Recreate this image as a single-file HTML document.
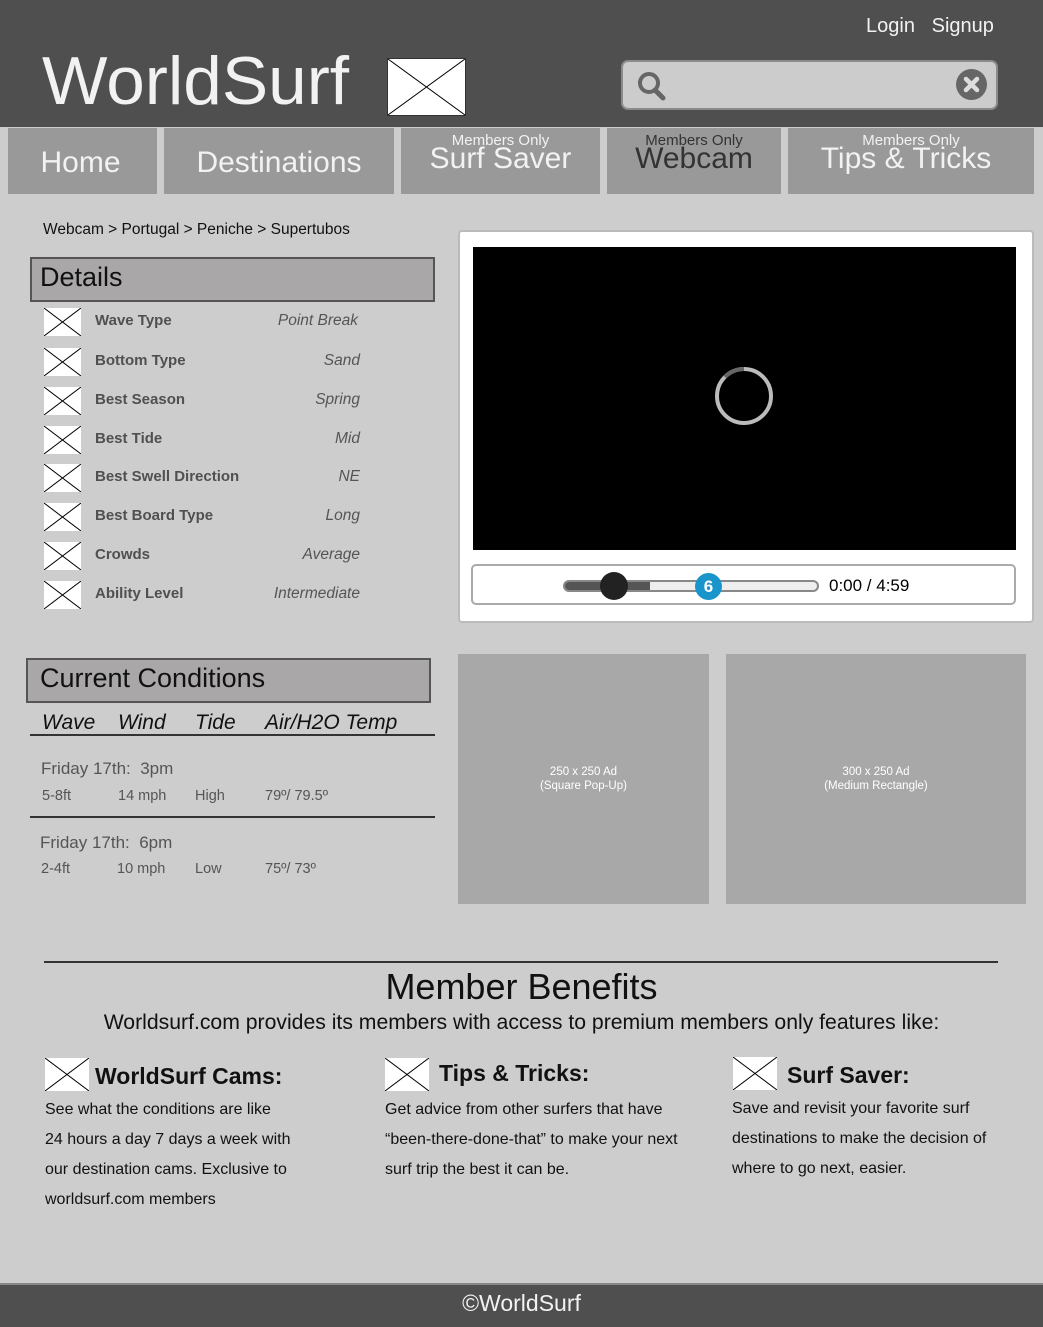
<!DOCTYPE html>
<html><head><meta charset="utf-8"><style>
*{margin:0;padding:0;box-sizing:border-box}
body{width:1043px;height:1327px;background:#cdcdcd;font-family:"Liberation Sans",sans-serif;position:relative;overflow:hidden}
.a{position:absolute;white-space:nowrap}
.x{position:absolute;background:#fff}
.x svg{display:block;width:100%;height:100%}
.tab{position:absolute;top:128px;height:66px;background:#999;color:#f2f2f2;text-align:center}
.tab .m{font-size:15px;position:absolute;left:0;right:0;top:4px}
.tab .t{font-size:30px;position:absolute;left:0;right:0;top:18px}
.lbl{position:absolute;left:95px;font-weight:bold;font-size:15px;color:#505050}
.val{position:absolute;right:683px;font-style:italic;font-size:15.5px;color:#555}
.ct{position:absolute;font-size:14.5px;color:#555}
.bt{position:absolute;font-size:16px;color:#111;line-height:30px}
</style></head><body>
<div class="a" style="left:0;top:0;width:1043px;height:127px;background:#4f4f4f"></div>
<div class="a" style="left:866px;top:15px;font-size:20px;color:#f2f2f2">Login&nbsp;&nbsp; Signup</div>
<div class="a" style="left:42px;top:42px;font-size:68px;color:#f2f2f2;transform:scaleX(1.02);transform-origin:left">WorldSurf</div>
<div class="x" style="left:387px;top:58px;width:79px;height:58px;border:1px solid #333"><svg viewBox="0 0 79 58" preserveAspectRatio="none"><path d="M0 0L79 58M79 0L0 58" stroke="#000" stroke-width="1"/></svg></div>
<div class="a" style="left:621px;top:60px;width:377px;height:50px;background:#ccc;border:2px solid #8a8a8a;border-radius:7px"></div>
<svg class="a" style="left:634px;top:69px" width="36" height="34" viewBox="0 0 36 34"><circle cx="15" cy="14" r="9" fill="none" stroke="#666" stroke-width="4"/><path d="M21 21L29 29" stroke="#666" stroke-width="5" stroke-linecap="round"/></svg>
<svg class="a" style="left:955px;top:68px" width="33" height="33" viewBox="0 0 33 33"><circle cx="16.5" cy="16.5" r="15.5" fill="#666"/><path d="M11 11L22 22M22 11L11 22" stroke="#ddd" stroke-width="4.5" stroke-linecap="round"/></svg>

<div class="tab" style="left:8px;width:149px"><div class="t" style="left:-4px">Home</div></div>
<div class="tab" style="left:164px;width:230px"><div class="t">Destinations</div></div>
<div class="tab" style="left:401px;width:199px"><div class="m">Members Only</div><div class="t" style="top:14px">Surf Saver</div></div>
<div class="tab" style="left:607px;width:174px;color:#333"><div class="m">Members Only</div><div class="t" style="top:14px">Webcam</div></div>
<div class="tab" style="left:788px;width:246px"><div class="m">Members Only</div><div class="t" style="top:14px;left:-10px">Tips &amp; Tricks</div></div>

<div class="a" style="left:43px;top:221px;font-size:15.5px;color:#111">Webcam &gt; Portugal &gt; Peniche &gt; Supertubos</div>
<div class="a" style="left:30px;top:257px;width:405px;height:45px;background:#a9a7a8;border:2px solid #555"></div>
<div class="a" style="left:40px;top:262px;font-size:27px;color:#111">Details</div>

<div class="x" style="left:44px;top:308px;width:37px;height:28px"><svg viewBox="0 0 37 28" preserveAspectRatio="none"><path d="M0 0L37 28M37 0L0 28" stroke="#000"/></svg></div>
<div class="lbl" style="top:312px">Wave Type</div><div class="val" style="top:312px;right:685px">Point Break</div>
<div class="x" style="left:44px;top:348px;width:37px;height:28px"><svg viewBox="0 0 37 28" preserveAspectRatio="none"><path d="M0 0L37 28M37 0L0 28" stroke="#000"/></svg></div>
<div class="lbl" style="top:352px">Bottom Type</div><div class="val" style="top:352px">Sand</div>
<div class="x" style="left:44px;top:387px;width:37px;height:28px"><svg viewBox="0 0 37 28" preserveAspectRatio="none"><path d="M0 0L37 28M37 0L0 28" stroke="#000"/></svg></div>
<div class="lbl" style="top:391px">Best Season</div><div class="val" style="top:391px">Spring</div>
<div class="x" style="left:44px;top:426px;width:37px;height:28px"><svg viewBox="0 0 37 28" preserveAspectRatio="none"><path d="M0 0L37 28M37 0L0 28" stroke="#000"/></svg></div>
<div class="lbl" style="top:430px">Best Tide</div><div class="val" style="top:430px">Mid</div>
<div class="x" style="left:44px;top:464px;width:37px;height:28px"><svg viewBox="0 0 37 28" preserveAspectRatio="none"><path d="M0 0L37 28M37 0L0 28" stroke="#000"/></svg></div>
<div class="lbl" style="top:468px">Best Swell Direction</div><div class="val" style="top:468px">NE</div>
<div class="x" style="left:44px;top:503px;width:37px;height:28px"><svg viewBox="0 0 37 28" preserveAspectRatio="none"><path d="M0 0L37 28M37 0L0 28" stroke="#000"/></svg></div>
<div class="lbl" style="top:507px">Best Board Type</div><div class="val" style="top:507px">Long</div>
<div class="x" style="left:44px;top:542px;width:37px;height:28px"><svg viewBox="0 0 37 28" preserveAspectRatio="none"><path d="M0 0L37 28M37 0L0 28" stroke="#000"/></svg></div>
<div class="lbl" style="top:546px">Crowds</div><div class="val" style="top:546px">Average</div>
<div class="x" style="left:44px;top:581px;width:37px;height:28px"><svg viewBox="0 0 37 28" preserveAspectRatio="none"><path d="M0 0L37 28M37 0L0 28" stroke="#000"/></svg></div>
<div class="lbl" style="top:585px">Ability Level</div><div class="val" style="top:585px">Intermediate</div>

<div class="a" style="left:458px;top:230px;width:576px;height:393px;background:#fff;border:2px solid #bbb;border-radius:4px"></div>
<div class="a" style="left:473px;top:247px;width:543px;height:303px;background:#000"></div>
<svg class="a" style="left:712px;top:364px" width="64" height="64" viewBox="0 0 64 64"><circle cx="32" cy="32" r="27" fill="none" stroke="#bbb" stroke-width="4"/><path d="M13 13A27 27 0 0 1 32 5" fill="none" stroke="#666" stroke-width="4"/></svg>
<div class="a" style="left:471px;top:564px;width:545px;height:41px;border:2px solid #aaa;border-radius:5px;background:#fff"></div>
<div class="a" style="left:563px;top:580px;width:256px;height:12px;border:2px solid #888;border-radius:6px;background:#eee"></div>
<div class="a" style="left:565px;top:582px;width:85px;height:8px;background:#555;border-radius:4px 0 0 4px"></div>
<div class="a" style="left:600px;top:572px;width:28px;height:28px;border-radius:50%;background:#222"></div>
<div class="a" style="left:695px;top:573px;width:27px;height:27px;border-radius:50%;background:#1a95cc;color:#fff;font-weight:bold;font-size:17px;text-align:center;line-height:27px">6</div>
<div class="a" style="left:829px;top:576px;font-size:17px;color:#000">0:00 / 4:59</div>

<div class="a" style="left:26px;top:658px;width:405px;height:45px;background:#a9a7a8;border:2px solid #555"></div>
<div class="a" style="left:40px;top:663px;font-size:27px;color:#111">Current Conditions</div>
<div class="a" style="left:42px;top:711px;font-size:21px;font-style:italic;color:#111">Wave</div>
<div class="a" style="left:118px;top:711px;font-size:21px;font-style:italic;color:#111">Wind</div>
<div class="a" style="left:195px;top:711px;font-size:21px;font-style:italic;color:#111">Tide</div>
<div class="a" style="left:265px;top:711px;font-size:21px;font-style:italic;color:#111">Air/H2O Temp</div>
<div class="a" style="left:30px;top:734px;width:405px;height:2px;background:#333"></div>
<div class="a" style="left:41px;top:759px;font-size:17px;color:#555">Friday 17th:&nbsp; 3pm</div>
<div class="ct" style="left:42px;top:788px">5-8ft</div><div class="ct" style="left:118px;top:788px">14 mph</div><div class="ct" style="left:195px;top:788px">High</div><div class="ct" style="left:265px;top:788px">79º/ 79.5º</div>
<div class="a" style="left:30px;top:816px;width:405px;height:2px;background:#333"></div>
<div class="a" style="left:40px;top:833px;font-size:17px;color:#555">Friday 17th:&nbsp; 6pm</div>
<div class="ct" style="left:41px;top:861px">2-4ft</div><div class="ct" style="left:117px;top:861px">10 mph</div><div class="ct" style="left:195px;top:861px">Low</div><div class="ct" style="left:265px;top:861px">75º/ 73º</div>

<div class="a" style="left:458px;top:654px;width:251px;height:250px;background:#a8a8a8;color:#fff;font-size:11.5px;text-align:center;padding-top:111px;line-height:14px">250 x 250 Ad<br>(Square Pop-Up)</div>
<div class="a" style="left:726px;top:654px;width:300px;height:250px;background:#a8a8a8;color:#fff;font-size:11.5px;text-align:center;padding-top:111px;line-height:14px">300 x 250 Ad<br>(Medium Rectangle)</div>

<div class="a" style="left:44px;top:961px;width:954px;height:2px;background:#333"></div>
<div class="a" style="left:0;width:1043px;text-align:center;top:966px;font-size:36px;color:#111">Member Benefits</div>
<div class="a" style="left:0;width:1043px;text-align:center;top:1011px;font-size:21.2px;color:#111">Worldsurf.com provides its members with access to premium members only features like:</div>

<div class="x" style="left:45px;top:1058px;width:44px;height:33px"><svg viewBox="0 0 44 33" preserveAspectRatio="none"><path d="M0 0L44 33M44 0L0 33" stroke="#000"/></svg></div>
<div class="a" style="left:95px;top:1063px;font-size:23px;font-weight:bold;color:#111">WorldSurf Cams:</div>
<div class="bt" style="left:45px;top:1095px">See what the conditions are like<br>24 hours a day 7 days a week with<br>our destination cams. Exclusive to<br>worldsurf.com members</div>

<div class="x" style="left:385px;top:1058px;width:44px;height:33px"><svg viewBox="0 0 44 33" preserveAspectRatio="none"><path d="M0 0L44 33M44 0L0 33" stroke="#000"/></svg></div>
<div class="a" style="left:439px;top:1060px;font-size:23px;font-weight:bold;color:#111">Tips &amp; Tricks:</div>
<div class="bt" style="left:385px;top:1095px">Get advice from other surfers that have<br>“been-there-done-that” to make your next<br>surf trip the best it can be.</div>

<div class="x" style="left:733px;top:1057px;width:44px;height:33px"><svg viewBox="0 0 44 33" preserveAspectRatio="none"><path d="M0 0L44 33M44 0L0 33" stroke="#000"/></svg></div>
<div class="a" style="left:787px;top:1062px;font-size:23px;font-weight:bold;color:#111">Surf Saver:</div>
<div class="bt" style="left:732px;top:1094px">Save and revisit your favorite surf<br>destinations to make the decision of<br>where to go next, easier.</div>

<div class="a" style="left:0;top:1283px;width:1043px;height:44px;background:#4f4f4f;border-top:2px solid #888"></div>
<div class="a" style="left:0;width:1043px;text-align:center;top:1290px;font-size:23px;color:#f2f2f2">©WorldSurf</div>
</body></html>
